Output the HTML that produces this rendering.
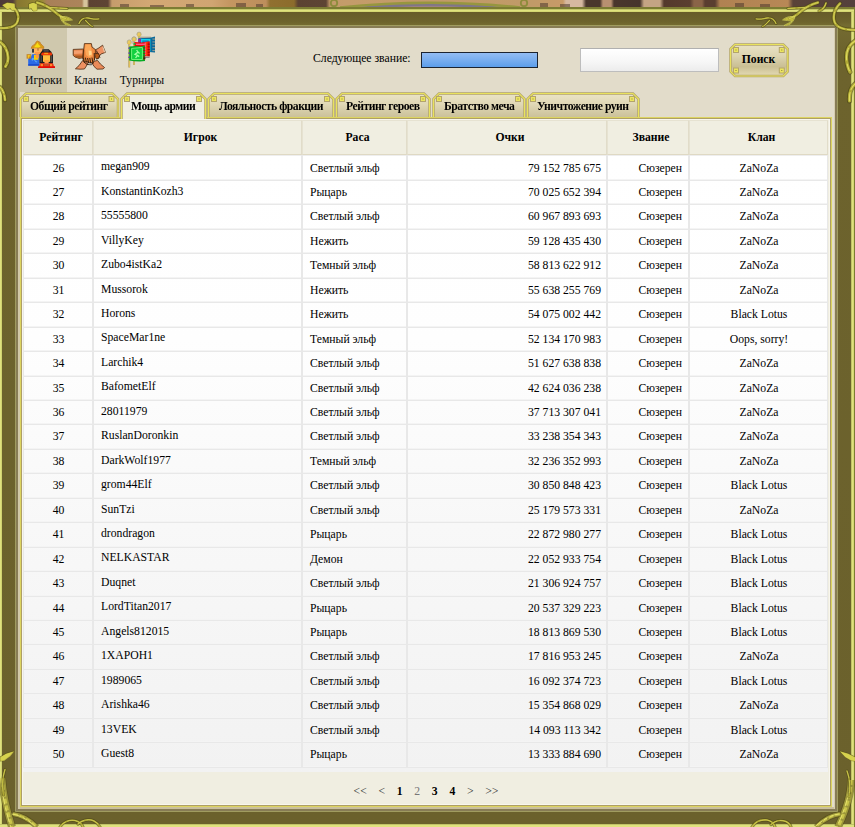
<!DOCTYPE html>
<html lang="ru">
<head>
<meta charset="utf-8">
<title>Рейтинг — Мощь армии</title>
<style>
*{box-sizing:border-box;margin:0;padding:0}
html,body{width:855px;height:827px;overflow:hidden;background:#6b612c}
body{font-family:"Liberation Serif","DejaVu Serif",serif;font-size:11.7px;color:#000;position:relative}
#page{position:absolute;left:0;top:0;width:855px;height:827px;overflow:hidden;background:#6b612c}
/* top picture strip */
#topimg{position:absolute;left:0;top:0;width:855px;height:7px;overflow:hidden;
 background:linear-gradient(90deg,#4c3a38 0,#54403a 13px,#86762f 17px,#9a8c36 42px,#a88058 47px,#ac845a 82px,#d6c49c 84px,#d6c49c 87px,#5c4232 89px,#5e4434 108px,#c69c6c 112px,#d3a874 150px,#d0a572 212px,#c49661 230px,#bd8e5c 266px,#907030 270px,#8c6c2c 294px,#5c4232 298px,#5e4434 326px,#c29a68 330px,#c49c6a 345px,#c09a68 528px,#c89a68 563px,#d6b8a0 566px,#d6b8a0 582px,#4a362c 586px,#4a362c 600px,#b89070 603px,#b89070 611px,#4a362c 614px,#46342c 640px,#c4a484 644px,#c4a484 660px,#54392c 664px,#5a3e30 690px,#8a6448 694px,#8a6448 702px,#5a3e30 705px,#5a3e30 715px,#b08252 720px,#b88856 788px,#5a4238 793px,#54403c 855px)}
/* frame */
#frA{position:absolute;left:0;top:7px;width:855px;height:820px;background:#7c7c33}
#frB{position:absolute;left:0;top:9px;width:854px;height:818px;background:linear-gradient(180deg,#675b29 0,#675b29 3px,#6d632d 13px,#746b31 16px,#6d632d 43px,#6b612c 100%)}
#frB:before{content:"";position:absolute;left:0;top:0;right:0;bottom:0;background:
 linear-gradient(180deg,#c2c468 0,#c2c468 1px,#e0e27e 1px,#e0e27e 2px,#d4d672 2px,#d4d672 3px,rgba(0,0,0,0) 3px) top/100% 3px no-repeat,
 linear-gradient(0deg,#e0e27e 0,#e0e27e 2px,#c2c468 2px,#c2c468 3px,rgba(0,0,0,0) 3px) bottom/100% 3px no-repeat,
 linear-gradient(90deg,#e0e27e 0,#e0e27e 1px,#d0d270 1px,#d0d270 2px,rgba(0,0,0,0) 2px) left/2px 100% no-repeat,
 linear-gradient(270deg,#d4d672 0,#d4d672 1px,#e0e27e 1px,#e0e27e 2px,#c2c468 2px,#c2c468 3px,rgba(0,0,0,0) 3px) right/3px 100% no-repeat}
#frC{position:absolute;left:15px;top:25px;width:823px;height:787px;border:1px solid #a09c60;background:#877c55}
#frD{position:absolute;left:18px;top:28px;width:817px;height:781px;background:#cfc6a4}
#content{position:absolute;left:18px;top:28px;width:817px;height:781px;background:linear-gradient(90deg,#d2c9a8 0,#d2c9a8 2px,rgba(226,220,202,0) 2px,rgba(226,220,202,0) 816px,#d6cdb0 816px),linear-gradient(180deg,#e2dcca 0,#e2dcca 779px,#cabf9c 779px)}
#orn{position:absolute;left:0;top:0;pointer-events:none}
.ic{position:absolute}
/* nav */
.nav{position:absolute;top:0;height:64px;text-align:center;color:#0a0a0a;font-size:11.7px}
.nav span{position:absolute;left:1px;right:-1px;top:45px;line-height:16px;white-space:nowrap}
.nav svg{position:absolute}
#n1{left:0;width:49px;background:#cfc8ad}
#n2{left:48px;width:47px}
#n3{left:95px;width:56px}
#lbl{position:absolute;left:295px;top:23px;line-height:16px;font-size:11.7px;white-space:nowrap}
#bar{position:absolute;left:403px;top:24px;width:117px;height:16px;border:1px solid #1c2430;background:linear-gradient(180deg,#93bdf3 0,#79aeef 50%,#5c9eea 100%)}
#q{position:absolute;left:562px;top:20px;width:139px;height:24px;border:1px solid #bdbdbd;border-top-color:#b0b0b0;background:linear-gradient(180deg,#fff 0,#f6f6f6 60%,#ececec 100%)}
#btn{position:absolute;left:712px;top:15.5px;width:58.3px;height:32.5px;color:#000}
#btn svg{position:absolute;left:-2px;top:-2px;overflow:visible}
#btn span{position:absolute;left:-1px;top:-0.5px;width:59px;height:34px;text-align:center;font-weight:bold;font-size:11.7px;line-height:33px}
.cq{position:absolute;width:4px;height:4px;border:1px solid #e6dc5a;background:#d8cc60}
/* tabs */
.tab{position:absolute;top:65px;height:26px;font-weight:bold;font-size:11.7px;letter-spacing:-0.5px;text-align:center;line-height:25px;white-space:nowrap;color:#000}
.tab svg{position:absolute;left:-2px;top:-2px;overflow:visible}
.tab span{position:relative;display:inline-block;left:0;top:1px;will-change:transform}
.tab.on{z-index:3}
/* panel */
#panel{position:absolute;left:2px;top:89px;width:812px;height:690px;background:#f0eee1;border:1px solid #dcd460;box-shadow:inset 0 0 0 1px #ae9f66, inset 0 0 0 2px #f8f6ee}
.th{position:absolute;top:2px;height:35px;background:#f0eee1;border:1px solid #e6e2d1;border-right-color:#e1dcc9;border-bottom-color:#dfd9c4;font-weight:bold;font-size:11.7px;text-align:center;line-height:34px;padding-left:6px;white-space:nowrap}
#tbody{position:absolute;left:2px;top:37px;width:805px;height:617px;background:linear-gradient(180deg,#fff 0,#fefefe 30%,#f8f8f8 60%,#f2f2f2 100%)}
.tr{position:absolute;left:0;width:805px}
.td{position:absolute;top:0;height:100%;border:1px solid #e8e8e8;border-top:0;box-shadow:inset 0 -1px 0 #f4f4f4;line-height:20px;padding-top:2px;white-space:nowrap;font-size:11.7px;overflow:hidden}
.c1{left:0;width:70px;text-align:center;padding-left:1px}
.c2{left:70px;width:209px;padding-left:7px}
.c2 a{position:relative;top:-2px}
.c2 a.u1{top:-1px}
.c3{left:279px;width:105px;padding-left:7px}
.c4{left:384px;width:200px;text-align:right;padding-right:5px}
.c5{left:584px;width:82px;text-align:right;padding-right:6px}
.c6{left:666px;width:139px;text-align:center;padding-left:1px}
#pager{position:absolute;left:0;right:0;top:666px;text-align:center;font-size:11.7px;line-height:16px;color:#3a3a3a;white-space:nowrap}
#pager a{padding:0 4.4px}
#pager b{padding:0 4.4px;color:#000}
#pager u{padding:0 4.4px;text-decoration:none;color:#777}
</style>
</head>
<body>
<svg width="0" height="0" style="position:absolute"><defs><linearGradient id="tg" x1="0" y1="0" x2="0" y2="1"><stop offset="0" stop-color="#ebe4c8"/><stop offset="0.45" stop-color="#e0d8b6"/><stop offset="1" stop-color="#cbc19a"/></linearGradient><linearGradient id="bg2" x1="0" y1="0" x2="0" y2="1"><stop offset="0" stop-color="#e9e2c6"/><stop offset="0.35" stop-color="#ddd5b2"/><stop offset="0.7" stop-color="#cabf94"/><stop offset="1" stop-color="#e4dbb4"/></linearGradient></defs></svg>
<div id="page">
<div id="topimg"><svg width="855" height="8" viewBox="0 0 855 8" style="position:absolute;left:0;top:0"><path d="M348,8 Q430,-1.5 512,8 Z" fill="#7f7688"/><path d="M385,8 Q430,3.5 475,8 Z" fill="#9a7f86"/><path d="M340,7.5 Q430,-2 520,7.5" fill="none" stroke="#96963f" stroke-width="2.4"/><circle cx="334" cy="3" r="3.2" fill="none" stroke="#8e8c3c" stroke-width="1.8"/><circle cx="524" cy="3" r="3.2" fill="none" stroke="#8e8c3c" stroke-width="1.8"/><g fill="#4e3a2e" opacity="0.55"><rect x="120" y="4" width="9" height="3"/><rect x="150" y="5" width="14" height="2"/><rect x="186" y="4" width="8" height="3"/><rect x="236" y="3" width="10" height="4"/><rect x="256" y="4" width="7" height="3"/><rect x="540" y="3" width="8" height="4"/><rect x="560" y="4" width="10" height="3"/><rect x="735" y="3" width="9" height="4"/><rect x="760" y="4" width="10" height="3"/></g></svg></div>
<div id="frA"></div><div id="frB"></div><div id="frC"></div>
<div id="content">
 <div class="nav" id="n1"><svg class="ic" width="34" height="34" viewBox="0 0 34 34" style="left:6px;top:10px"><path d="M7.2,10.3 L8,8.2 L9.5,7.2 L11.5,5.2 L12.2,3.8 L13.6,3 L15,3.8 L16,4.2 L16.6,5.6 L18.3,7.2 L19.6,8.5 L19.8,10.4 Z" fill="#d89a18" stroke="#c07a28" stroke-width="0.8"/><path d="M10,9.2 L12.5,6 L13.6,4.4 L14.6,6.4 L16.6,8.6 L15,9.4 L12,9.6 Z" fill="#f8dc10"/><rect x="8" y="11" width="2.2" height="3.6" fill="#3a3a3a"/><rect x="18" y="11" width="1.3" height="2.5" fill="#3a3a3a"/><rect x="10" y="10.4" width="8.4" height="5.8" fill="#ffb260"/><rect x="13.3" y="10.2" width="1.4" height="2.4" fill="#b87a30"/><rect x="11" y="14" width="6.5" height="2.2" fill="#ff9a4a"/><path d="M4.2,27.6 L4.2,21 L7.2,18.6 L8,16.2 L15.5,16.2 L15.5,27.6 Z" fill="#2a6ae6"/><rect x="4.2" y="26.3" width="11.3" height="1.4" fill="#1444c8"/><path d="M7.5,21 L9,19.5 L11.5,22.5 L13.5,24 L12,24.4 L9.6,21.6 L8,23 Z" fill="#5aa8f6"/><rect x="2.6" y="16.2" width="4.6" height="4.4" fill="#c48422"/><rect x="3.8" y="17.2" width="2.6" height="1.3" fill="#f6c822"/><rect x="3.8" y="17.2" width="1.2" height="2.6" fill="#f6c822"/><rect x="10" y="17" width="4.4" height="4.8" fill="#f4d200"/><rect x="11.6" y="16.2" width="3.2" height="4" fill="#ff9840"/><path d="M15.4,25.5 L15.4,16.5 L17.5,13.5 L19.5,11.3 L24.8,11.3 L27,13.5 L29,17 L29,25.5 Z" fill="#1c1c1c"/><rect x="19.5" y="11.6" width="5.2" height="2.2" fill="#4a4a4a"/><rect x="16.6" y="17.5" width="1.2" height="6.5" fill="#505050"/><rect x="27" y="17.5" width="1.2" height="6.5" fill="#505050"/><path d="M17,16 L18.4,14.6 L27.2,14.6 L28.2,16 L27.6,17.6 L17.8,17.6 Z" fill="#f23808"/><rect x="20.2" y="14.8" width="4" height="1.4" fill="#ff9a10"/><rect x="19" y="17.2" width="7.2" height="6.6" fill="#ffc040"/><rect x="20" y="22" width="5.2" height="2.2" fill="#ffa040"/><rect x="20.6" y="24" width="4" height="2" fill="#ff9850"/><path d="M14.2,29.8 L14.2,28.4 L15.4,27.8 L15.6,26 L17.6,25 L20,25.4 L25.4,25.4 L27.6,25 L29.4,26 L29.6,27.8 L31,28.4 L31,29.8 Z" fill="#ea2408"/><rect x="16.6" y="26" width="2.4" height="2.4" fill="#ff8a28"/><rect x="26" y="26" width="2.2" height="2.4" fill="#ff8a28"/><rect x="20.2" y="26.4" width="4.8" height="1.2" fill="#b0683a"/><rect x="14.2" y="28.6" width="16.8" height="1.3" fill="#e00404"/></svg><span>Игроки</span></div>
 <div class="nav" id="n2"><svg class="ic" width="40" height="34" viewBox="0 0 40 34" style="left:4px;top:10px"><path d="M3.2,11.4 L13.5,11 L14.5,19.5 L9,20.4 L5,19 L3.2,17.4 Z" fill="#e07a40" stroke="#4a2a10" stroke-width="0.8" stroke-linejoin="round"/><path d="M4,12.6 L12.5,12.2 L12.8,15.5 L4,16 Z" fill="#f4a070"/><path d="M4.5,17.6 L13,17.6 L13,19.2 L9,20 L5.5,19 Z" fill="#a85a20"/><path d="M24,12.5 L28,10.5 L32.6,7.2 L35.4,14.4 L31,16 L28.4,19 L25,19 Z" fill="#ee9060" stroke="#4a2a10" stroke-width="0.8" stroke-linejoin="round"/><path d="M33,8 L35.2,14 L34,14.4 L32.4,9 Z" fill="#e8c8a8"/><path d="M5.4,30.8 L9,27.6 L12.6,22.6 L18.4,24 L16.4,28 L14.4,31 L10,31.2 Z" fill="#ee9060" stroke="#4a2a10" stroke-width="0.8" stroke-linejoin="round"/><path d="M21.5,24 L27.5,22.4 L30.4,26 L34.6,29.6 L33,31 L27,31.2 L24,28.4 Z" fill="#ea8a58" stroke="#4a2a10" stroke-width="0.8" stroke-linejoin="round"/><path d="M14.4,5.6 L21.4,5.6 L22,9 L25.4,11.6 L25.4,19 L23.4,24.4 L20.4,24.8 L17.4,23.6 L14,24 L12.6,20 L13.6,12 Z" fill="#f08a40" stroke="#4a2a10" stroke-width="0.8" stroke-linejoin="round"/><path d="M15.6,6.4 L20.4,6.4 L21.6,12 L22.4,18 L19.4,19.4 L16,17 L15,11 Z" fill="#fca858"/><path d="M18.6,12.6 L21.4,13 L21.8,16.6 L19,17.4 Z" fill="#ffd890"/><path d="M12.8,12 L14.2,12 L14,22 L12.8,20 Z" fill="#5a3010" opacity="0.8"/><path d="M13.6,20 L14.2,24.4 M15.4,19.6 L16.4,24.4 M17.6,20 L18.6,25 M19.8,20 L20.6,25 M22,19.6 L22.8,24.6 M24.2,15 L24.4,22 M26.6,12.6 L27.6,16.4 L30,19.6" stroke="#3a200c" stroke-width="1" fill="none"/><path d="M25.4,15.6 L28,15 L29.6,17.6 L28.6,20.4 L26,21" stroke="#3a200c" stroke-width="0.9" fill="#b85a18"/><path d="M14,24 L17,26.4 L21,26.6 L24,24.6" stroke="#3a200c" stroke-width="1" fill="none"/><rect x="18.6" y="25.6" width="3.4" height="1.6" fill="#6a6a6a"/></svg><span>Кланы</span></div>
 <div class="nav" id="n3"><svg class="ic" width="40" height="44" viewBox="0 0 40 44" style="left:9px;top:1px"><rect x="16.099999999999998" y="5.2" width="1.9" height="8.8" fill="#9a9480"/><rect x="16.4" y="5.2" width="1.3" height="8.8" fill="#e8c456"/><circle cx="17.049999999999997" cy="5.2" r="2.1" fill="#eacb5c" stroke="#a8a08a" stroke-width="0.7"/><rect x="14.999999999999998" y="6.2" width="4.1" height="1.1" fill="#e8c456"/><rect x="18" y="7.6" width="11" height="1.4" fill="#b0aa98"/><path d="M16.4,9.2 L28,8.8 L33,7.6 L33,23.4 L27,23 L20,22 L16.4,22 Z" fill="#0a6a9c"/><rect x="19" y="10" width="9.4" height="12.4" fill="#10d6ea"/><rect x="20.2" y="11.4" width="6.6" height="10" fill="#0a8cc0"/><rect x="16.4" y="10" width="2.6" height="3" fill="#9a20a8"/><rect x="30.4" y="9.6" width="2.6" height="0.9" fill="#b0a48a"/><rect x="30.4" y="12.5" width="2.6" height="0.9" fill="#b0a48a"/><rect x="30.4" y="15.399999999999999" width="2.6" height="0.9" fill="#b0a48a"/><rect x="30.4" y="18.299999999999997" width="2.6" height="0.9" fill="#b0a48a"/><rect x="30.4" y="21.2" width="2.6" height="0.9" fill="#b0a48a"/><rect x="11.1" y="10" width="1.9" height="26" fill="#9a9480"/><rect x="11.4" y="10" width="1.3" height="26" fill="#e8c456"/><circle cx="12.05" cy="10" r="2.1" fill="#eacb5c" stroke="#a8a08a" stroke-width="0.7"/><rect x="10.0" y="11" width="4.1" height="1.1" fill="#e8c456"/><rect x="10" y="8" width="3" height="7" fill="#b8b4a4" opacity="0.7"/><rect x="11.1" y="10" width="1.9" height="2" fill="#9a9480"/><rect x="11.4" y="10" width="1.3" height="2" fill="#e8c456"/><circle cx="12.05" cy="10" r="2.1" fill="#eacb5c" stroke="#a8a08a" stroke-width="0.7"/><rect x="10.0" y="11" width="4.1" height="1.1" fill="#e8c456"/><path d="M12.4,13 L20,13.6 L27.8,12.2 L27.8,27.6 L21,27 L12.4,27 Z" fill="#f00808"/><rect x="14" y="14.6" width="9.6" height="1.4" fill="#ff5a8a"/><rect x="22.6" y="13.4" width="1.3" height="13" fill="#ff5a70"/><rect x="24" y="13" width="1.6" height="14" fill="#ff3a08"/><rect x="25.6" y="14.6" width="2.2" height="1.1" fill="#9a0606"/><rect x="25.6" y="17.3" width="2.2" height="1.1" fill="#9a0606"/><rect x="25.6" y="20.0" width="2.2" height="1.1" fill="#9a0606"/><rect x="25.6" y="22.700000000000003" width="2.2" height="1.1" fill="#9a0606"/><rect x="25.6" y="25.4" width="2.2" height="1.1" fill="#9a0606"/><rect x="21.4" y="27.6" width="6.2" height="1.4" fill="#8a8a88"/><rect x="11.6" y="14" width="1.8" height="1.8" fill="#10c040"/><rect x="6.3" y="13" width="1.9" height="25.4" fill="#9a9480"/><rect x="6.6" y="13" width="1.3" height="25.4" fill="#e8c456"/><circle cx="7.25" cy="13" r="2.1" fill="#eacb5c" stroke="#a8a08a" stroke-width="0.7"/><rect x="5.199999999999999" y="14" width="4.1" height="1.1" fill="#e8c456"/><path d="M7.2,17.6 L14,17 L19,17.4 L23,16.4 L23,32 L18,32.6 L12,32.2 L7.2,31.4 Z" fill="#04a822"/><path d="M9.6,19.4 L20.4,18.4 L20.4,30.6 L9.6,30.4 Z" fill="#12d040" stroke="#8cff8c" stroke-width="0.8"/><path d="M14.6,21 L16,23 L13,25.4 L15.4,26.4 L13.6,29 M16,23 L17.6,24.4 M15.4,26.4 L17.2,27.6" stroke="#a4ffa4" stroke-width="1.3" fill="none"/><rect x="21.4" y="18.2" width="1.8" height="1.1" fill="#a01010"/><rect x="21.4" y="21.0" width="1.8" height="1.1" fill="#a01010"/><rect x="21.4" y="23.799999999999997" width="1.8" height="1.1" fill="#a01010"/><rect x="21.4" y="26.599999999999998" width="1.8" height="1.1" fill="#a01010"/><rect x="21.4" y="29.4" width="1.8" height="1.1" fill="#a01010"/><rect x="6.4" y="18.4" width="1.6" height="1.4" fill="#4a4ab0"/><rect x="6.4" y="23.4" width="1.6" height="1.4" fill="#4a4ab0"/><rect x="6.4" y="27.6" width="1.6" height="1.4" fill="#4a4ab0"/><rect x="21.4" y="28.4" width="2" height="1.4" fill="#500808"/></svg><span>Турниры</span></div>
 <div id="lbl">Следующее звание:</div>
 <div id="bar"></div>
 <div id="q"></div>
 <div id="btn"><svg width="62.3" height="36.5" viewBox="0 0 62.3 36.5"><path d="M2.5,7.0 L7.0,2.5 L55.3,2.5 L59.8,7.0 L59.8,29.5 L55.3,34.0 L7.0,34.0 L2.5,29.5 Z" fill="url(#bg2)" stroke="#b3a46c" stroke-width="2.5" stroke-linejoin="miter"/><path d="M2.5,7.0 L7.0,2.5 L55.3,2.5 L59.8,7.0 L59.8,29.5 L55.3,34.0 L7.0,34.0 L2.5,29.5 Z" fill="none" stroke="#e9e25c" stroke-width="1.1"/><rect x="5.5" y="5.5" width="5" height="5" fill="#ece65e" stroke="#b3a46c" stroke-width="1"/><rect x="7.5" y="7.5" width="1" height="1" fill="#8a7a40"/><rect x="51.3" y="5.5" width="5" height="5" fill="#ece65e" stroke="#b3a46c" stroke-width="1"/><rect x="53.3" y="7.5" width="1" height="1" fill="#8a7a40"/><rect x="5.5" y="26.0" width="5" height="5" fill="#ece65e" stroke="#b3a46c" stroke-width="1"/><rect x="7.5" y="28.0" width="1" height="1" fill="#8a7a40"/><rect x="51.3" y="26.0" width="5" height="5" fill="#ece65e" stroke="#b3a46c" stroke-width="1"/><rect x="53.3" y="28.0" width="1" height="1" fill="#8a7a40"/></svg><span>Поиск</span></div>
 <div class="tab" style="left:2px;width:98.5px"><svg width="102.5" height="28" viewBox="0 0 102.5 28"><path d="M2.5,26 L2.5,8.0 L8.0,2.5 L94.5,2.5 L100.0,8.0 L100.0,26" fill="url(#tg)" stroke="#b3a46c" stroke-width="2.5" stroke-linejoin="miter"/><path d="M2.5,26 L2.5,8.0 L8.0,2.5 L94.5,2.5 L100.0,8.0 L100.0,26" fill="none" stroke="#e9e25c" stroke-width="1.1"/><rect x="5.5" y="5.5" width="5" height="5" fill="#ece65e" stroke="#b3a46c" stroke-width="1"/><rect x="7.5" y="7.5" width="1" height="1" fill="#8a7a40"/><rect x="91.0" y="5.5" width="5" height="5" fill="#ece65e" stroke="#b3a46c" stroke-width="1"/><rect x="93.0" y="7.5" width="1" height="1" fill="#8a7a40"/></svg><span>Общий рейтинг</span></div>
 <div class="tab on" style="left:103px;width:85px"><svg width="89" height="30" viewBox="0 0 89 30"><path d="M2.5,28 L2.5,8.0 L8.0,2.5 L81.0,2.5 L86.5,8.0 L86.5,28" fill="#f0eee1" stroke="#b3a46c" stroke-width="2.5" stroke-linejoin="miter"/><path d="M2.5,28 L2.5,8.0 L8.0,2.5 L81.0,2.5 L86.5,8.0 L86.5,28" fill="none" stroke="#e9e25c" stroke-width="1.1"/><rect x="5.5" y="5.5" width="5" height="5" fill="#ece65e" stroke="#b3a46c" stroke-width="1"/><rect x="7.5" y="7.5" width="1" height="1" fill="#8a7a40"/><rect x="77.5" y="5.5" width="5" height="5" fill="#ece65e" stroke="#b3a46c" stroke-width="1"/><rect x="79.5" y="7.5" width="1" height="1" fill="#8a7a40"/></svg><span>Мощь армии</span></div>
 <div class="tab" style="left:190px;width:126px"><svg width="130" height="28" viewBox="0 0 130 28"><path d="M2.5,26 L2.5,8.0 L8.0,2.5 L122.0,2.5 L127.5,8.0 L127.5,26" fill="url(#tg)" stroke="#b3a46c" stroke-width="2.5" stroke-linejoin="miter"/><path d="M2.5,26 L2.5,8.0 L8.0,2.5 L122.0,2.5 L127.5,8.0 L127.5,26" fill="none" stroke="#e9e25c" stroke-width="1.1"/><rect x="5.5" y="5.5" width="5" height="5" fill="#ece65e" stroke="#b3a46c" stroke-width="1"/><rect x="7.5" y="7.5" width="1" height="1" fill="#8a7a40"/><rect x="118.5" y="5.5" width="5" height="5" fill="#ece65e" stroke="#b3a46c" stroke-width="1"/><rect x="120.5" y="7.5" width="1" height="1" fill="#8a7a40"/></svg><span>Лояльность фракции</span></div>
 <div class="tab" style="left:318px;width:94px"><svg width="98" height="28" viewBox="0 0 98 28"><path d="M2.5,26 L2.5,8.0 L8.0,2.5 L90.0,2.5 L95.5,8.0 L95.5,26" fill="url(#tg)" stroke="#b3a46c" stroke-width="2.5" stroke-linejoin="miter"/><path d="M2.5,26 L2.5,8.0 L8.0,2.5 L90.0,2.5 L95.5,8.0 L95.5,26" fill="none" stroke="#e9e25c" stroke-width="1.1"/><rect x="5.5" y="5.5" width="5" height="5" fill="#ece65e" stroke="#b3a46c" stroke-width="1"/><rect x="7.5" y="7.5" width="1" height="1" fill="#8a7a40"/><rect x="86.5" y="5.5" width="5" height="5" fill="#ece65e" stroke="#b3a46c" stroke-width="1"/><rect x="88.5" y="7.5" width="1" height="1" fill="#8a7a40"/></svg><span>Рейтинг героев</span></div>
 <div class="tab" style="left:415px;width:92px"><svg width="96" height="28" viewBox="0 0 96 28"><path d="M2.5,26 L2.5,8.0 L8.0,2.5 L88.0,2.5 L93.5,8.0 L93.5,26" fill="url(#tg)" stroke="#b3a46c" stroke-width="2.5" stroke-linejoin="miter"/><path d="M2.5,26 L2.5,8.0 L8.0,2.5 L88.0,2.5 L93.5,8.0 L93.5,26" fill="none" stroke="#e9e25c" stroke-width="1.1"/><rect x="5.5" y="5.5" width="5" height="5" fill="#ece65e" stroke="#b3a46c" stroke-width="1"/><rect x="7.5" y="7.5" width="1" height="1" fill="#8a7a40"/><rect x="84.5" y="5.5" width="5" height="5" fill="#ece65e" stroke="#b3a46c" stroke-width="1"/><rect x="86.5" y="7.5" width="1" height="1" fill="#8a7a40"/></svg><span>Братство меча</span></div>
 <div class="tab" style="left:509px;width:112px"><svg width="116" height="28" viewBox="0 0 116 28"><path d="M2.5,26 L2.5,8.0 L8.0,2.5 L108.0,2.5 L113.5,8.0 L113.5,26" fill="url(#tg)" stroke="#b3a46c" stroke-width="2.5" stroke-linejoin="miter"/><path d="M2.5,26 L2.5,8.0 L8.0,2.5 L108.0,2.5 L113.5,8.0 L113.5,26" fill="none" stroke="#e9e25c" stroke-width="1.1"/><rect x="5.5" y="5.5" width="5" height="5" fill="#ece65e" stroke="#b3a46c" stroke-width="1"/><rect x="7.5" y="7.5" width="1" height="1" fill="#8a7a40"/><rect x="104.5" y="5.5" width="5" height="5" fill="#ece65e" stroke="#b3a46c" stroke-width="1"/><rect x="106.5" y="7.5" width="1" height="1" fill="#8a7a40"/></svg><span>Уничтожение руин</span></div>

 <div id="panel">
  <div class="th" style="left:2px;width:70px">Рейтинг</div>
  <div class="th" style="left:72px;width:209px">Игрок</div>
  <div class="th" style="left:281px;width:105px">Раса</div>
  <div class="th" style="left:386px;width:200px">Очки</div>
  <div class="th" style="left:586px;width:82px">Звание</div>
  <div class="th" style="left:668px;width:139px">Клан</div>
  <div id="tbody">
<div class="tr" style="top:0px;height:26px"><div style="padding-top:4px;box-shadow:inset 0 -1px 0 #f4f4f4,inset 0 1px 0 #eee" class="td c1">26</div><div style="padding-top:4px;box-shadow:inset 0 -1px 0 #f4f4f4,inset 0 1px 0 #eee" class="td c2"><a>megan909</a></div><div style="padding-top:4px;box-shadow:inset 0 -1px 0 #f4f4f4,inset 0 1px 0 #eee" class="td c3">Светлый эльф</div><div style="padding-top:4px;box-shadow:inset 0 -1px 0 #f4f4f4,inset 0 1px 0 #eee" class="td c4">79 152 785 675</div><div style="padding-top:4px;box-shadow:inset 0 -1px 0 #f4f4f4,inset 0 1px 0 #eee" class="td c5">Сюзерен</div><div style="padding-top:4px;box-shadow:inset 0 -1px 0 #f4f4f4,inset 0 1px 0 #eee" class="td c6">ZaNoZa</div></div>
<div class="tr" style="top:26px;height:24px"><div class="td c1">27</div><div class="td c2"><a class="u1">KonstantinKozh3</a></div><div class="td c3">Рыцарь</div><div class="td c4">70 025 652 394</div><div class="td c5">Сюзерен</div><div class="td c6">ZaNoZa</div></div>
<div class="tr" style="top:50px;height:25px"><div class="td c1">28</div><div class="td c2"><a class="u1">55555800</a></div><div class="td c3">Светлый эльф</div><div class="td c4">60 967 893 693</div><div class="td c5">Сюзерен</div><div class="td c6">ZaNoZa</div></div>
<div class="tr" style="top:75px;height:24px"><div class="td c1">29</div><div class="td c2"><a class="u1">VillyKey</a></div><div class="td c3">Нежить</div><div class="td c4">59 128 435 430</div><div class="td c5">Сюзерен</div><div class="td c6">ZaNoZa</div></div>
<div class="tr" style="top:99px;height:25px"><div class="td c1">30</div><div class="td c2"><a class="u1">Zubo4istKa2</a></div><div class="td c3">Темный эльф</div><div class="td c4">58 813 622 912</div><div class="td c5">Сюзерен</div><div class="td c6">ZaNoZa</div></div>
<div class="tr" style="top:124px;height:24px"><div class="td c1">31</div><div class="td c2"><a class="u1">Mussorok</a></div><div class="td c3">Нежить</div><div class="td c4">55 638 255 769</div><div class="td c5">Сюзерен</div><div class="td c6">ZaNoZa</div></div>
<div class="tr" style="top:148px;height:25px"><div class="td c1">32</div><div class="td c2"><a class="u1">Horons</a></div><div class="td c3">Нежить</div><div class="td c4">54 075 002 442</div><div class="td c5">Сюзерен</div><div class="td c6">Black Lotus</div></div>
<div class="tr" style="top:173px;height:24px"><div class="td c1">33</div><div class="td c2"><a>SpaceMar1ne</a></div><div class="td c3">Темный эльф</div><div class="td c4">52 134 170 983</div><div class="td c5">Сюзерен</div><div class="td c6">Oops, sorry!</div></div>
<div class="tr" style="top:197px;height:25px"><div class="td c1">34</div><div class="td c2"><a class="u1">Larchik4</a></div><div class="td c3">Светлый эльф</div><div class="td c4">51 627 638 838</div><div class="td c5">Сюзерен</div><div class="td c6">ZaNoZa</div></div>
<div class="tr" style="top:222px;height:24px"><div class="td c1">35</div><div class="td c2"><a>BafometElf</a></div><div class="td c3">Светлый эльф</div><div class="td c4">42 624 036 238</div><div class="td c5">Сюзерен</div><div class="td c6">ZaNoZa</div></div>
<div class="tr" style="top:246px;height:24px"><div class="td c1">36</div><div class="td c2"><a class="u1">28011979</a></div><div class="td c3">Светлый эльф</div><div class="td c4">37 713 307 041</div><div class="td c5">Сюзерен</div><div class="td c6">ZaNoZa</div></div>
<div class="tr" style="top:270px;height:25px"><div class="td c1">37</div><div class="td c2"><a class="u1">RuslanDoronkin</a></div><div class="td c3">Светлый эльф</div><div class="td c4">33 238 354 343</div><div class="td c5">Сюзерен</div><div class="td c6">ZaNoZa</div></div>
<div class="tr" style="top:295px;height:24px"><div class="td c1">38</div><div class="td c2"><a class="u1">DarkWolf1977</a></div><div class="td c3">Темный эльф</div><div class="td c4">32 236 352 993</div><div class="td c5">Сюзерен</div><div class="td c6">ZaNoZa</div></div>
<div class="tr" style="top:319px;height:25px"><div class="td c1">39</div><div class="td c2"><a class="u1">grom44Elf</a></div><div class="td c3">Светлый эльф</div><div class="td c4">30 850 848 423</div><div class="td c5">Сюзерен</div><div class="td c6">Black Lotus</div></div>
<div class="tr" style="top:344px;height:24px"><div class="td c1">40</div><div class="td c2"><a class="u1">SunTzi</a></div><div class="td c3">Светлый эльф</div><div class="td c4">25 179 573 331</div><div class="td c5">Сюзерен</div><div class="td c6">ZaNoZa</div></div>
<div class="tr" style="top:368px;height:25px"><div class="td c1">41</div><div class="td c2"><a class="u1">drondragon</a></div><div class="td c3">Рыцарь</div><div class="td c4">22 872 980 277</div><div class="td c5">Сюзерен</div><div class="td c6">Black Lotus</div></div>
<div class="tr" style="top:393px;height:24px"><div class="td c1">42</div><div class="td c2"><a>NELKASTAR</a></div><div class="td c3">Демон</div><div class="td c4">22 052 933 754</div><div class="td c5">Сюзерен</div><div class="td c6">Black Lotus</div></div>
<div class="tr" style="top:417px;height:25px"><div class="td c1">43</div><div class="td c2"><a class="u1">Duqnet</a></div><div class="td c3">Светлый эльф</div><div class="td c4">21 306 924 757</div><div class="td c5">Сюзерен</div><div class="td c6">Black Lotus</div></div>
<div class="tr" style="top:442px;height:24px"><div class="td c1">44</div><div class="td c2"><a>LordTitan2017</a></div><div class="td c3">Рыцарь</div><div class="td c4">20 537 329 223</div><div class="td c5">Сюзерен</div><div class="td c6">Black Lotus</div></div>
<div class="tr" style="top:466px;height:24px"><div class="td c1">45</div><div class="td c2"><a class="u1">Angels812015</a></div><div class="td c3">Рыцарь</div><div class="td c4">18 813 869 530</div><div class="td c5">Сюзерен</div><div class="td c6">Black Lotus</div></div>
<div class="tr" style="top:490px;height:25px"><div class="td c1">46</div><div class="td c2"><a class="u1">1XAPOH1</a></div><div class="td c3">Светлый эльф</div><div class="td c4">17 816 953 245</div><div class="td c5">Сюзерен</div><div class="td c6">ZaNoZa</div></div>
<div class="tr" style="top:515px;height:24px"><div class="td c1">47</div><div class="td c2"><a class="u1">1989065</a></div><div class="td c3">Светлый эльф</div><div class="td c4">16 092 374 723</div><div class="td c5">Сюзерен</div><div class="td c6">Black Lotus</div></div>
<div class="tr" style="top:539px;height:25px"><div class="td c1">48</div><div class="td c2"><a class="u1">Arishka46</a></div><div class="td c3">Светлый эльф</div><div class="td c4">15 354 868 029</div><div class="td c5">Сюзерен</div><div class="td c6">ZaNoZa</div></div>
<div class="tr" style="top:564px;height:24px"><div class="td c1">49</div><div class="td c2"><a class="u1">13VEK</a></div><div class="td c3">Светлый эльф</div><div class="td c4">14 093 113 342</div><div class="td c5">Сюзерен</div><div class="td c6">Black Lotus</div></div>
<div class="tr" style="top:588px;height:25px"><div class="td c1">50</div><div class="td c2"><a class="u1">Guest8</a></div><div class="td c3">Рыцарь</div><div class="td c4">13 333 884 690</div><div class="td c5">Сюзерен</div><div class="td c6">ZaNoZa</div></div>
  </div>
  <div id="pager"><a>&lt;&lt;</a> <a>&lt;</a> <b>1</b> <u>2</u> <b>3</b> <b>4</b> <a>&gt;</a> <a>&gt;&gt;</a></div>
 </div>
</div>
<svg id="orn" width="855" height="827" viewBox="0 0 855 827"><path d="M2,778 C3,792 6,808 12,827" fill="none" stroke="#4a4412" stroke-opacity="0.55" stroke-width="7.9"/><path d="M2,778 C3,792 6,808 12,827" fill="none" stroke="#9c963a" stroke-width="6.5"/><path d="M2,778 C3,792 6,808 12,827" fill="none" stroke="#c9c44a" stroke-width="3.2" stroke-dasharray="5 2"/><path d="M2,778 C3,792 6,808 12,827" fill="none" stroke="#e9e670" stroke-opacity="0.9" stroke-width="1" transform="translate(-1.2,0)" stroke-dasharray="9 3 4 2"/><path d="M13,814 C21,815 30,820 37,827" fill="none" stroke="#4a4412" stroke-opacity="0.55" stroke-width="5.6"/><path d="M13,814 C21,815 30,820 37,827" fill="none" stroke="#9c963a" stroke-width="4.2"/><path d="M13,814 C21,815 30,820 37,827" fill="none" stroke="#c9c44a" stroke-width="2.1" stroke-dasharray="5 2"/><path d="M13,814 C21,815 30,820 37,827" fill="none" stroke="#e9e670" stroke-opacity="0.9" stroke-width="1" transform="translate(-1.2,0)" stroke-dasharray="9 3 4 2"/><path d="M851,780 C851,794 846,810 838,827" fill="none" stroke="#4a4412" stroke-opacity="0.55" stroke-width="7.9"/><path d="M851,780 C851,794 846,810 838,827" fill="none" stroke="#9c963a" stroke-width="6.5"/><path d="M851,780 C851,794 846,810 838,827" fill="none" stroke="#c9c44a" stroke-width="3.2" stroke-dasharray="5 2"/><path d="M851,780 C851,794 846,810 838,827" fill="none" stroke="#e9e670" stroke-opacity="0.9" stroke-width="1" transform="translate(-1.2,0)" stroke-dasharray="9 3 4 2"/><path d="M840,814 C832,815 823,820 816,827" fill="none" stroke="#4a4412" stroke-opacity="0.55" stroke-width="5.6"/><path d="M840,814 C832,815 823,820 816,827" fill="none" stroke="#9c963a" stroke-width="4.2"/><path d="M840,814 C832,815 823,820 816,827" fill="none" stroke="#c9c44a" stroke-width="2.1" stroke-dasharray="5 2"/><path d="M840,814 C832,815 823,820 816,827" fill="none" stroke="#e9e670" stroke-opacity="0.9" stroke-width="1" transform="translate(-1.2,0)" stroke-dasharray="9 3 4 2"/><path d="M15,9 C18.5,13 19.5,19 16.5,23.5 C13.5,27.5 7,28.5 0,28" fill="none" stroke="#4a4412" stroke-opacity="0.6" stroke-width="4.2" stroke-linecap="round"/><path d="M37,2.5 C45,4.5 52,9 58,14.5 C61,17 63,18 66,18.5" fill="none" stroke="#4a4412" stroke-opacity="0.6" stroke-width="4.0" stroke-linecap="round"/><path d="M79,23.5 C80.5,19.5 84,17.5 88,18 C92,18.6 95,19.8 99,18.8" fill="none" stroke="#4a4412" stroke-opacity="0.6" stroke-width="2.7" stroke-linecap="round"/><path d="M85.5,20.5 C87.5,22 89,25 92.5,26.5" fill="none" stroke="#4a4412" stroke-opacity="0.6" stroke-width="2.6" stroke-linecap="round"/><path d="M50,7.5 L67,8.5" fill="none" stroke="#4a4412" stroke-opacity="0.6" stroke-width="3.2" stroke-linecap="round"/><path d="M0,42 C4.5,45 7.5,50 8,57 C8.3,61 7.5,64 5.5,66.5" fill="none" stroke="#4a4412" stroke-opacity="0.6" stroke-width="4.6" stroke-linecap="round"/><path d="M0,87 C3,90 4.5,94 5,100" fill="none" stroke="#4a4412" stroke-opacity="0.6" stroke-width="4.4" stroke-linecap="round"/><path d="M840,3.5 C835.5,8 833,14 834,20 C835,26 841,30 855,30" fill="none" stroke="#4a4412" stroke-opacity="0.6" stroke-width="4.2" stroke-linecap="round"/><path d="M818,2.5 C810,4.5 803,9 797,14.5 C794,17 792,18 789,18.5" fill="none" stroke="#4a4412" stroke-opacity="0.6" stroke-width="4.0" stroke-linecap="round"/><path d="M776,23.5 C774.5,19.5 771,17.5 767,18 C763,18.6 760,19.8 756,18.8" fill="none" stroke="#4a4412" stroke-opacity="0.6" stroke-width="2.7" stroke-linecap="round"/><path d="M769.5,20.5 C767.5,22 766,25 762.5,26.5" fill="none" stroke="#4a4412" stroke-opacity="0.6" stroke-width="2.6" stroke-linecap="round"/><path d="M788,8.5 L805,7.5" fill="none" stroke="#4a4412" stroke-opacity="0.6" stroke-width="3.2" stroke-linecap="round"/><path d="M826,3 C825,7 822,10 819,11" fill="none" stroke="#4a4412" stroke-opacity="0.6" stroke-width="3.2" stroke-linecap="round"/><path d="M855,41 C849.5,44.5 846.5,50 846.5,57 C846.5,62 847.5,67 850,72" fill="none" stroke="#4a4412" stroke-opacity="0.6" stroke-width="5.0" stroke-linecap="round"/><path d="M855,84 C851,87.5 849,93 849.5,101" fill="none" stroke="#4a4412" stroke-opacity="0.6" stroke-width="5.0" stroke-linecap="round"/><path d="M60,827 C63,822 69,819.5 75,820.5 C79,821.5 82,824 83,827" fill="none" stroke="#4a4412" stroke-opacity="0.6" stroke-width="3.2" stroke-linecap="round"/><path d="M78,824 C82,820 89,818.5 94,821 C97,822.5 99,825 100,827" fill="none" stroke="#4a4412" stroke-opacity="0.6" stroke-width="3.2" stroke-linecap="round"/><path d="M752,827 C755,822 761,819.5 767,820 C771,820.8 774,823.5 775,827" fill="none" stroke="#4a4412" stroke-opacity="0.6" stroke-width="3.2" stroke-linecap="round"/><path d="M771,824.5 C775,820.5 781,819.5 786,821.5 C789,823 790.5,825 791,827" fill="none" stroke="#4a4412" stroke-opacity="0.6" stroke-width="3.2" stroke-linecap="round"/><path d="M5,769.5 C2.5,777 2,786 3.5,795" fill="none" stroke="#4a4412" stroke-opacity="0.6" stroke-width="2.8" stroke-linecap="round"/><path d="M847,771 C850,779 850.5,788 849,797" fill="none" stroke="#4a4412" stroke-opacity="0.6" stroke-width="2.8" stroke-linecap="round"/><path d="M2,5 L7,2.5 L14.5,3.5 L15,9.5 L12,10.5 L10,8 L7.5,9.5 L5,7.5 Z" fill="#c4be3e" stroke="#4a4412" stroke-opacity="0.6" stroke-width="1"/><path d="M28.5,4 L33,2.5 L37,4 L37,10.5 L33,11 L31,8 L29,9 Z" fill="#c4be3e" stroke="#4a4412" stroke-opacity="0.6" stroke-width="1"/><path d="M0,757 L6,753.5 L14,751 L10,756 L4,760.5 L0,761 Z" fill="#c4be3e" stroke="#4a4412" stroke-opacity="0.6" stroke-width="1"/><path d="M855,761 L851,760.5 L845,757 L839.5,751 L848,753.5 L855,757 Z" fill="#c4be3e" stroke="#4a4412" stroke-opacity="0.6" stroke-width="1"/><path d="M60,17 C65,15.5 70,17.5 72.5,20 C69,20.5 66,20.5 63,21.5 C66,23 69,24 71,25.5 C66.5,26 62,23.5 60,17 Z" fill="#c4be3e" stroke="#4a4412" stroke-opacity="0.6" stroke-width="1"/><path d="M795,17 C790,15.5 785,17.5 782.5,20 C786,20.5 789,20.5 792,21.5 C789,23 786,24 784,25.5 C788.5,26 793,23.5 795,17 Z" fill="#c4be3e" stroke="#4a4412" stroke-opacity="0.6" stroke-width="1"/><path d="M15,9 C18.5,13 19.5,19 16.5,23.5 C13.5,27.5 7,28.5 0,28" fill="none" stroke="#b0a935" stroke-width="2.5" stroke-linecap="round"/><path d="M37,2.5 C45,4.5 52,9 58,14.5 C61,17 63,18 66,18.5" fill="none" stroke="#b0a935" stroke-width="2.4" stroke-linecap="round"/><path d="M79,23.5 C80.5,19.5 84,17.5 88,18 C92,18.6 95,19.8 99,18.8" fill="none" stroke="#b0a935" stroke-width="1.3" stroke-linecap="round"/><path d="M85.5,20.5 C87.5,22 89,25 92.5,26.5" fill="none" stroke="#b0a935" stroke-width="1.2" stroke-linecap="round"/><path d="M50,7.5 L67,8.5" fill="none" stroke="#b0a935" stroke-width="1.7" stroke-linecap="round"/><path d="M0,42 C4.5,45 7.5,50 8,57 C8.3,61 7.5,64 5.5,66.5" fill="none" stroke="#b0a935" stroke-width="2.9" stroke-linecap="round"/><path d="M0,87 C3,90 4.5,94 5,100" fill="none" stroke="#b0a935" stroke-width="2.7" stroke-linecap="round"/><path d="M840,3.5 C835.5,8 833,14 834,20 C835,26 841,30 855,30" fill="none" stroke="#b0a935" stroke-width="2.5" stroke-linecap="round"/><path d="M818,2.5 C810,4.5 803,9 797,14.5 C794,17 792,18 789,18.5" fill="none" stroke="#b0a935" stroke-width="2.4" stroke-linecap="round"/><path d="M776,23.5 C774.5,19.5 771,17.5 767,18 C763,18.6 760,19.8 756,18.8" fill="none" stroke="#b0a935" stroke-width="1.3" stroke-linecap="round"/><path d="M769.5,20.5 C767.5,22 766,25 762.5,26.5" fill="none" stroke="#b0a935" stroke-width="1.2" stroke-linecap="round"/><path d="M788,8.5 L805,7.5" fill="none" stroke="#b0a935" stroke-width="1.7" stroke-linecap="round"/><path d="M826,3 C825,7 822,10 819,11" fill="none" stroke="#b0a935" stroke-width="1.7" stroke-linecap="round"/><path d="M855,41 C849.5,44.5 846.5,50 846.5,57 C846.5,62 847.5,67 850,72" fill="none" stroke="#b0a935" stroke-width="3.2" stroke-linecap="round"/><path d="M855,84 C851,87.5 849,93 849.5,101" fill="none" stroke="#b0a935" stroke-width="3.2" stroke-linecap="round"/><path d="M60,827 C63,822 69,819.5 75,820.5 C79,821.5 82,824 83,827" fill="none" stroke="#b0a935" stroke-width="1.7" stroke-linecap="round"/><path d="M78,824 C82,820 89,818.5 94,821 C97,822.5 99,825 100,827" fill="none" stroke="#b0a935" stroke-width="1.7" stroke-linecap="round"/><path d="M752,827 C755,822 761,819.5 767,820 C771,820.8 774,823.5 775,827" fill="none" stroke="#b0a935" stroke-width="1.7" stroke-linecap="round"/><path d="M771,824.5 C775,820.5 781,819.5 786,821.5 C789,823 790.5,825 791,827" fill="none" stroke="#b0a935" stroke-width="1.7" stroke-linecap="round"/><path d="M5,769.5 C2.5,777 2,786 3.5,795" fill="none" stroke="#b0a935" stroke-width="1.4" stroke-linecap="round"/><path d="M847,771 C850,779 850.5,788 849,797" fill="none" stroke="#b0a935" stroke-width="1.4" stroke-linecap="round"/><path d="M15,9 C18.5,13 19.5,19 16.5,23.5 C13.5,27.5 7,28.5 0,28" fill="none" stroke="#ebe86c" stroke-opacity="0.8" stroke-width="0.9" stroke-linecap="round" stroke-dasharray="7 3 12 4"/><path d="M37,2.5 C45,4.5 52,9 58,14.5 C61,17 63,18 66,18.5" fill="none" stroke="#ebe86c" stroke-opacity="0.8" stroke-width="0.8" stroke-linecap="round" stroke-dasharray="7 3 12 4"/><path d="M79,23.5 C80.5,19.5 84,17.5 88,18 C92,18.6 95,19.8 99,18.8" fill="none" stroke="#ebe86c" stroke-opacity="0.8" stroke-width="0.5" stroke-linecap="round" stroke-dasharray="7 3 12 4"/><path d="M85.5,20.5 C87.5,22 89,25 92.5,26.5" fill="none" stroke="#ebe86c" stroke-opacity="0.8" stroke-width="0.5" stroke-linecap="round" stroke-dasharray="7 3 12 4"/><path d="M50,7.5 L67,8.5" fill="none" stroke="#ebe86c" stroke-opacity="0.8" stroke-width="0.6" stroke-linecap="round" stroke-dasharray="7 3 12 4"/><path d="M0,42 C4.5,45 7.5,50 8,57 C8.3,61 7.5,64 5.5,66.5" fill="none" stroke="#ebe86c" stroke-opacity="0.8" stroke-width="1.0" stroke-linecap="round" stroke-dasharray="7 3 12 4"/><path d="M0,87 C3,90 4.5,94 5,100" fill="none" stroke="#ebe86c" stroke-opacity="0.8" stroke-width="1.0" stroke-linecap="round" stroke-dasharray="7 3 12 4"/><path d="M840,3.5 C835.5,8 833,14 834,20 C835,26 841,30 855,30" fill="none" stroke="#ebe86c" stroke-opacity="0.8" stroke-width="0.9" stroke-linecap="round" stroke-dasharray="7 3 12 4"/><path d="M818,2.5 C810,4.5 803,9 797,14.5 C794,17 792,18 789,18.5" fill="none" stroke="#ebe86c" stroke-opacity="0.8" stroke-width="0.8" stroke-linecap="round" stroke-dasharray="7 3 12 4"/><path d="M776,23.5 C774.5,19.5 771,17.5 767,18 C763,18.6 760,19.8 756,18.8" fill="none" stroke="#ebe86c" stroke-opacity="0.8" stroke-width="0.5" stroke-linecap="round" stroke-dasharray="7 3 12 4"/><path d="M769.5,20.5 C767.5,22 766,25 762.5,26.5" fill="none" stroke="#ebe86c" stroke-opacity="0.8" stroke-width="0.5" stroke-linecap="round" stroke-dasharray="7 3 12 4"/><path d="M788,8.5 L805,7.5" fill="none" stroke="#ebe86c" stroke-opacity="0.8" stroke-width="0.6" stroke-linecap="round" stroke-dasharray="7 3 12 4"/><path d="M826,3 C825,7 822,10 819,11" fill="none" stroke="#ebe86c" stroke-opacity="0.8" stroke-width="0.6" stroke-linecap="round" stroke-dasharray="7 3 12 4"/><path d="M855,41 C849.5,44.5 846.5,50 846.5,57 C846.5,62 847.5,67 850,72" fill="none" stroke="#ebe86c" stroke-opacity="0.8" stroke-width="1.1" stroke-linecap="round" stroke-dasharray="7 3 12 4"/><path d="M855,84 C851,87.5 849,93 849.5,101" fill="none" stroke="#ebe86c" stroke-opacity="0.8" stroke-width="1.1" stroke-linecap="round" stroke-dasharray="7 3 12 4"/><path d="M60,827 C63,822 69,819.5 75,820.5 C79,821.5 82,824 83,827" fill="none" stroke="#ebe86c" stroke-opacity="0.8" stroke-width="0.6" stroke-linecap="round" stroke-dasharray="7 3 12 4"/><path d="M78,824 C82,820 89,818.5 94,821 C97,822.5 99,825 100,827" fill="none" stroke="#ebe86c" stroke-opacity="0.8" stroke-width="0.6" stroke-linecap="round" stroke-dasharray="7 3 12 4"/><path d="M752,827 C755,822 761,819.5 767,820 C771,820.8 774,823.5 775,827" fill="none" stroke="#ebe86c" stroke-opacity="0.8" stroke-width="0.6" stroke-linecap="round" stroke-dasharray="7 3 12 4"/><path d="M771,824.5 C775,820.5 781,819.5 786,821.5 C789,823 790.5,825 791,827" fill="none" stroke="#ebe86c" stroke-opacity="0.8" stroke-width="0.6" stroke-linecap="round" stroke-dasharray="7 3 12 4"/><path d="M5,769.5 C2.5,777 2,786 3.5,795" fill="none" stroke="#ebe86c" stroke-opacity="0.8" stroke-width="0.5" stroke-linecap="round" stroke-dasharray="7 3 12 4"/><path d="M847,771 C850,779 850.5,788 849,797" fill="none" stroke="#ebe86c" stroke-opacity="0.8" stroke-width="0.5" stroke-linecap="round" stroke-dasharray="7 3 12 4"/><path d="M2,5 L7,2.5 L14.5,3.5 L15,9.5 L12,10.5 L10,8 L7.5,9.5 L5,7.5 Z" fill="#e0dc55" transform="translate(0.3,0.3)" opacity="0.7"/><path d="M28.5,4 L33,2.5 L37,4 L37,10.5 L33,11 L31,8 L29,9 Z" fill="#e0dc55" transform="translate(0.3,0.3)" opacity="0.7"/><path d="M0,757 L6,753.5 L14,751 L10,756 L4,760.5 L0,761 Z" fill="#e0dc55" transform="translate(0.3,0.3)" opacity="0.7"/><path d="M855,761 L851,760.5 L845,757 L839.5,751 L848,753.5 L855,757 Z" fill="#e0dc55" transform="translate(0.3,0.3)" opacity="0.7"/><path d="M60,17 C65,15.5 70,17.5 72.5,20 C69,20.5 66,20.5 63,21.5 C66,23 69,24 71,25.5 C66.5,26 62,23.5 60,17 Z" fill="none" stroke="#e6e268" stroke-width="0.7" opacity="0.9"/><path d="M795,17 C790,15.5 785,17.5 782.5,20 C786,20.5 789,20.5 792,21.5 C789,23 786,24 784,25.5 C788.5,26 793,23.5 795,17 Z" fill="none" stroke="#e6e268" stroke-width="0.7" opacity="0.9"/></svg>
</div>
</body>
</html>
